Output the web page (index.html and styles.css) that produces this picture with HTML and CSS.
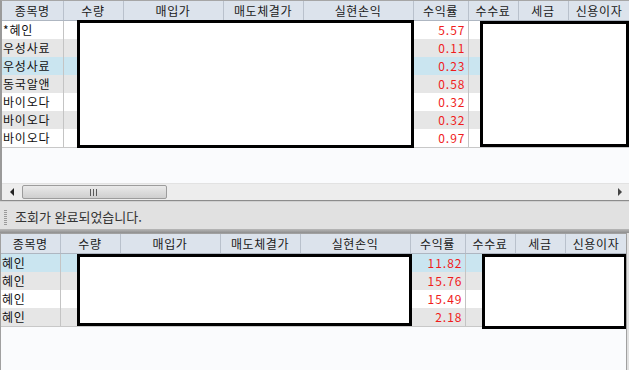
FILE: index.html
```html
<!DOCTYPE html>
<html lang="ko">
<head>
    <meta charset="UTF-8">
    <title>잔고 실현손익</title>
    <link rel="stylesheet" href="styles.css">
</head>
<body>
    <!-- upper result grid -->
    <div class="panel panel-top">
        <table class="grid grid-top">
            <colgroup>
                <col class="c-name"><col class="c-qty"><col class="c-buy"><col class="c-sell"><col class="c-pl">
                <col class="c-rate"><col class="c-fee"><col class="c-tax"><col class="c-int">
            </colgroup>
            <thead>
                <tr><th>종목명</th><th>수량</th><th>매입가</th><th>매도체결가</th><th>실현손익</th><th>수익률</th><th>수수료</th><th>세금</th><th>신용이자</th></tr>
            </thead>
            <tbody>
                <tr><td class="name">*혜인</td><td></td><td></td><td></td><td></td><td class="rate">5.57</td><td></td><td></td><td></td></tr>
                <tr class="alt"><td class="name">우성사료</td><td></td><td></td><td></td><td></td><td class="rate">0.11</td><td></td><td></td><td></td></tr>
                <tr class="sel"><td class="name">우성사료</td><td></td><td></td><td></td><td></td><td class="rate">0.23</td><td></td><td></td><td></td></tr>
                <tr class="alt"><td class="name">동국알앤</td><td></td><td></td><td></td><td></td><td class="rate">0.58</td><td></td><td></td><td></td></tr>
                <tr><td class="name">바이오다</td><td></td><td></td><td></td><td></td><td class="rate">0.32</td><td></td><td></td><td></td></tr>
                <tr class="alt"><td class="name">바이오다</td><td></td><td></td><td></td><td></td><td class="rate">0.32</td><td></td><td></td><td></td></tr>
                <tr class="last"><td class="name">바이오다</td><td></td><td></td><td></td><td></td><td class="rate">0.97</td><td></td><td></td><td></td></tr>
            </tbody>
        </table>
        <div class="filler"></div>
        <div class="hscroll">
            <div class="arrow arrow-left"></div>
            <div class="track">
                <div class="thumb"><span class="grip"></span></div>
            </div>
            <div class="arrow arrow-right"></div>
        </div>
        <div class="mask mask-top-a"></div>
        <div class="mask mask-top-b"></div>
    </div>

    <div class="status">
        <span class="status-grip"></span>
        <span class="status-text">조회가 완료되었습니다.</span>
    </div>
    <div class="splitter"></div>

    <!-- lower result grid -->
    <div class="panel panel-bottom">
        <table class="grid grid-bottom">
            <colgroup>
                <col class="c-name2"><col class="c-qty"><col class="c-buy"><col class="c-sell"><col class="c-pl">
                <col class="c-rate"><col class="c-fee"><col class="c-tax"><col class="c-int">
            </colgroup>
            <thead>
                <tr><th>종목명</th><th>수량</th><th>매입가</th><th>매도체결가</th><th>실현손익</th><th>수익률</th><th>수수료</th><th>세금</th><th>신용이자</th></tr>
            </thead>
            <tbody>
                <tr class="sel"><td class="name">혜인</td><td></td><td></td><td></td><td></td><td class="rate">11.82</td><td></td><td></td><td></td></tr>
                <tr class="alt"><td class="name">혜인</td><td></td><td></td><td></td><td></td><td class="rate">15.76</td><td></td><td></td><td></td></tr>
                <tr><td class="name">혜인</td><td></td><td></td><td></td><td></td><td class="rate">15.49</td><td></td><td></td><td></td></tr>
                <tr class="alt last"><td class="name">혜인</td><td></td><td></td><td></td><td></td><td class="rate">2.18</td><td></td><td></td><td></td></tr>
            </tbody>
        </table>
        <div class="filler"></div>
        <div class="mask mask-bot-a"></div>
        <div class="mask mask-bot-b"></div>
    </div>
</body>
</html>
```

FILE: styles.css
```css
html, body {
    margin: 0;
    padding: 0;
}

body {
    width: 629px;
    height: 370px;
    overflow: hidden;
    background-color: #e1e1e1;
    font-family: "Noto Sans CJK KR", "Noto Sans", sans-serif;
    font-size: 12px;
    color: #111;
    display: flex;
    flex-direction: column;
}

.panel {
    position: relative;
    display: flex;
    flex-direction: column;
    background-color: #fafbfd;
    overflow: hidden;
    box-sizing: border-box;
}

.panel-top {
    height: 201px;
    border: 1px solid #8c8c8c;
    border-top-color: #a6a6a6;
    border-right: none;
    border-left: 2px solid #9a9a9a;
}

.panel-bottom {
    flex: 1;
    width: 627px;
    border: 1px solid #a0a0a0;
    border-bottom: none;
}

.grid {
    border-collapse: collapse;
    table-layout: fixed;
    width: 100%;
}

.grid-top { width: 627px; }
.grid-bottom { width: 626px; }

.c-name { width: 61px; }
.c-name2 { width: 59px; }
.c-qty { width: 60px; }
.c-buy { width: 100px; }
.c-sell { width: 80px; }
.c-pl { width: 110px; }
.c-rate { width: 55px; }
.c-fee { width: 50px; }
.c-tax { width: 50px; }
.c-int { width: 62px; }

.grid th {
    height: 19px;
    padding: 0;
    background-color: #dce3ec;
    border-right: 1px solid #b9c1cc;
    border-bottom: 1px solid #aeb6c1;
    font-weight: normal;
    font-size: 12px;
    line-height: 19px;
    letter-spacing: 0.6px;
    color: #1a1a1a;
    text-align: center;
    white-space: nowrap;
    overflow: hidden;
}

.grid td {
    height: 18px;
    padding: 0;
    border-right: 1px solid #c4c4c4;
    line-height: 18px;
    white-space: nowrap;
    overflow: hidden;
    background-color: #fff;
}

.grid tr.alt td { background-color: #e6e6e6; }
.grid tr.sel td { background-color: #cae5f0; }
.grid tr.last td { border-bottom: 1px solid #c8c8c8; }

.grid td.name {
    padding-left: 1px;
    letter-spacing: 0.8px;
}

.grid td.rate {
    text-align: right;
    padding-right: 2px;
    color: #f01c1c;
    letter-spacing: 1px;
}

.filler {
    flex: 1;
}

/* blanked-out value blocks */
.mask {
    position: absolute;
    box-sizing: border-box;
    border: 3px solid #000;
    background-color: #fff;
}

.mask-top-a { left: 75px; top: 19px; width: 337px; height: 128px; }
.mask-top-b { left: 478px; top: 20px; width: 149px; height: 126px; }
.mask-bot-a { left: 76px; top: 20px; width: 335px; height: 72px; }
.mask-bot-b { left: 481px; top: 20px; width: 145px; height: 75px; }

/* horizontal scroll bar */
.hscroll {
    display: flex;
    height: 17px;
    background-color: #ededed;
    border-top: 1px solid #e2e2e2;
    box-sizing: border-box;
}

.arrow {
    width: 19px;
    position: relative;
}

.arrow::after {
    content: "";
    position: absolute;
    top: 4px;
    border-top: 4px solid transparent;
    border-bottom: 4px solid transparent;
}

.arrow-left::after {
    left: 8px;
    border-right: 4px solid #222;
}

.arrow-right::after {
    left: 8px;
    border-left: 4px solid #444;
}

.track {
    flex: 1;
    display: flex;
    align-items: center;
}

.thumb {
    width: 145px;
    height: 14px;
    margin-left: 1px;
    box-sizing: border-box;
    border: 1px solid #9c9c9c;
    border-radius: 2px;
    background: linear-gradient(#eaeaea, #dcdcdc 50%, #cfcfcf);
    display: flex;
    align-items: center;
    justify-content: center;
}

.grip {
    width: 9px;
    height: 7px;
    background: repeating-linear-gradient(90deg, #5a5a5a 0 1px, transparent 1px 3px);
}

/* status bar */
.status {
    height: 28px;
    display: flex;
    align-items: center;
    background-color: #e1e1e1;
    box-shadow: inset 0 5px 0 -4px #d0d0d0;
}

.status-grip {
    width: 3px;
    height: 15px;
    margin: 4px 0 0 4px;
    background: repeating-linear-gradient(#9a9a9a 0 1px, transparent 1px 2px);
}

.status-text {
    margin: 3px 0 0 8px;
    font-size: 13px;
    color: #333;
    letter-spacing: 0;
}

.splitter {
    height: 4px;
    background: linear-gradient(#b8b8b8, #8e8e8e);
}
```
